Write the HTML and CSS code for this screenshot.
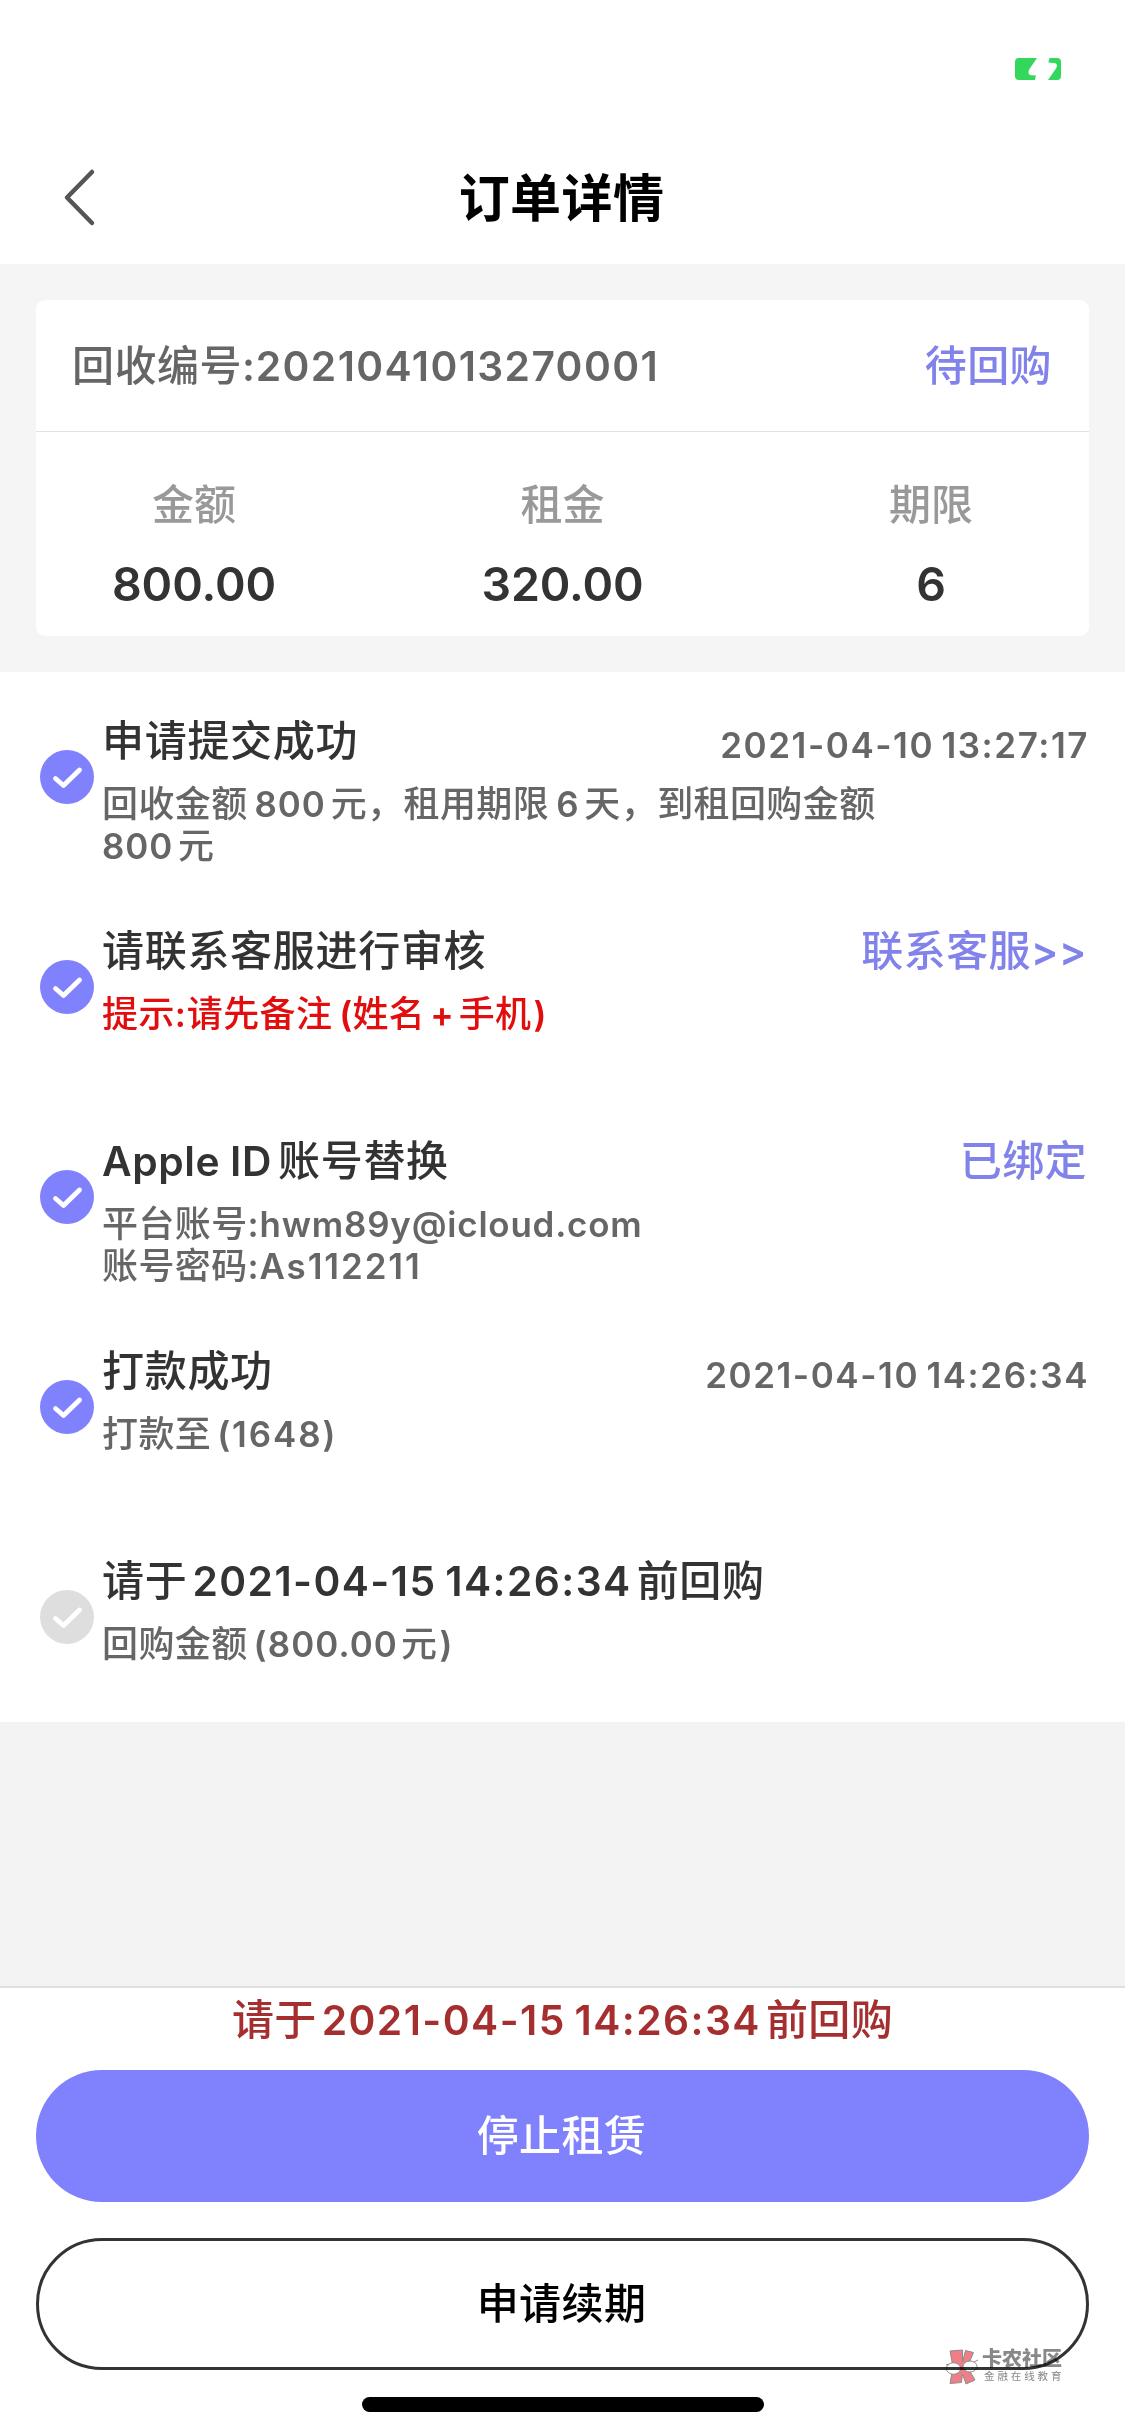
FILE: index.html
```
<!DOCTYPE html>
<html lang="zh-CN">
<head>
<meta charset="utf-8">
<title>订单详情</title>
<link rel="stylesheet" href="styles.css">
</head>
<body>
<svg class="sprite" aria-hidden="true">
  <symbol id="check" viewBox="0 0 54 54">
    <circle cx="27" cy="27" r="27"/>
    <path d="M15.500 28.500L23.500 35.500L39.500 20" fill="none" stroke="#fff" stroke-width="4.800" stroke-linecap="round" stroke-linejoin="round"/>
  </symbol>
</svg>
<div class="screen">
  <div class="statusbar">
    <svg class="battery" width="48" height="24" viewBox="0 0 48 24">
      <path d="M5 1H23L15.200 12.500Q13 17.800 17.500 18.200L22 18.400L20.800 23H5Q1 23 1 19V5Q1 1 5 1Z"/>
      <path d="M35.500 1H43Q47 1 47 5V19Q47 23 43 23H34L42.300 11Q44.500 6.200 40 5.900L34.300 5.600Z"/>
    </svg>
  </div>
  <header class="navbar">
    <svg class="back" width="36" height="60" viewBox="0 0 36 60"><path d="M31 4L6 29.500L31 55"/></svg>
    <h1 class="navtitle">订单详情</h1>
  </header>

  <section class="summary">
    <div class="card">
      <div class="card-head">
        <span>回收编号<span class="num colon">:</span><span class="num order">2021041013270001</span></span>
        <span class="link">待回购</span>
      </div>
      <div class="stats">
        <div class="stat"><span class="label">金额</span><span class="value">800.00</span></div>
        <div class="stat"><span class="label">租金</span><span class="value">320.00</span></div>
        <div class="stat"><span class="label">期限</span><span class="value">6</span></div>
      </div>
    </div>
  </section>

  <ol class="steps">
    <li class="step">
      <svg class="mark"><use href="#check"/></svg>
      <div class="content">
        <div class="line"><span class="title">申请提交成功</span><time class="time num">2021-04-10 13:27:17</time></div>
        <p class="desc">回收金额<span class="num gap">800</span>元，租用期限<span class="num gap">6</span>天，到租回购金额<br><span class="num lead">800</span>元</p>
      </div>
    </li>
    <li class="step">
      <svg class="mark"><use href="#check"/></svg>
      <div class="content">
        <div class="line"><span class="title">请联系客服进行审核</span><a class="link">联系客服<span class="num arrows">&gt;&gt;</span></a></div>
        <p class="desc tip">提示<span class="num colon">:</span>请先备注<span class="num open">(</span>姓名<span class="num plus">+</span>手机<span class="num close">)</span></p>
      </div>
    </li>
    <li class="step">
      <svg class="mark"><use href="#check"/></svg>
      <div class="content">
        <div class="line"><span class="title"><span class="num apple">Apple ID</span>账号替换</span><span class="link">已绑定</span></div>
        <p class="desc">平台账号<span class="num colon">:</span><span class="num mail">hwm89y@icloud.com</span><br>账号密码<span class="num colon">:</span><span class="num">As112211</span></p>
      </div>
    </li>
    <li class="step">
      <svg class="mark"><use href="#check"/></svg>
      <div class="content">
        <div class="line"><span class="title">打款成功</span><time class="time num">2021-04-10 14:26:34</time></div>
        <p class="desc">打款至<span class="num card-no">(1648)</span></p>
      </div>
    </li>
    <li class="step pending">
      <svg class="mark"><use href="#check"/></svg>
      <div class="content">
        <div class="line"><span class="title">请于<span class="num date">2021-04-15 14:26:34</span>前回购</span></div>
        <p class="desc">回购金额<span class="num amount">(800.00</span>元<span class="num close">)</span></p>
      </div>
    </li>
  </ol>

  <footer class="footer">
    <p class="notice">请于<span class="num date">2021-04-15 14:26:34</span>前回购</p>
    <button class="btn primary">停止租赁</button>
    <button class="btn outline">申请续期</button>
    <div class="home"></div>
  </footer>

  <div class="watermark">
    <svg width="34" height="36" viewBox="0 0 34 36">
      <g fill="#ef7f86" stroke="#8c8c8c" stroke-width="1">
        <path d="M5 2L17.500 1L17.500 13L20.500 1.500L28.500 3.500L22.500 18L30 31L21 35L17.500 25L16.500 33.500L5 34.500L8 18Z"/>
      </g>
      <g fill="#fff" stroke="#8c8c8c" stroke-width="1">
        <ellipse cx="8.500" cy="19.500" rx="7" ry="5.800"/>
        <ellipse cx="25" cy="17.500" rx="7" ry="5.500"/>
        <path d="M1 16L4 15M29 13L33 11" fill="none"/>
      </g>
    </svg>
    <div class="wm-text"><span class="wm-name">卡农社区</span><span class="wm-sub">金融在线教育</span></div>
  </div>
</div>
</body>
</html>
```
FILE: styles.css
```
* { box-sizing: border-box; }
body, h1, p, ol { margin: 0; padding: 0; }
body {
  font-family: Inter, "Noto Sans CJK SC", sans-serif;
  font-weight: 500;
  font-size: 42px;
  line-height: 42px;
  color: #333;
  background: #f3f3f3;
}
.sprite { position: absolute; width: 0; height: 0; }
.screen {
  position: relative;
  width: 1125px;
  height: 2436px;
  display: flex;
  flex-direction: column;
  overflow: hidden;
}

/* Latin runs sit slightly smaller and looser than the Chinese text */
.num { font-size: .97em; line-height: 0; letter-spacing: 1.9px; font-weight: 560; }

.statusbar {
  height: 132px;
  padding: 57px 63px 0 0;
  background: #fff;
  display: flex;
  justify-content: flex-end;
}
.battery { fill: #32d75b; }
.navbar {
  height: 132px;
  padding: 0 63px 0 61px;
  background: #fff;
  display: grid;
  grid-template-columns: 36px 1fr 36px;
  align-items: center;
}
.back { fill: none; stroke: #555; stroke-width: 4.5; stroke-linecap: round; stroke-linejoin: round; }
.navtitle { text-align: center; font-size: 51px; line-height: 60px; padding-top: 2px; letter-spacing: .4px; font-weight: 600; color: #000; }

.summary { padding: 36px; background: #f5f5f5; }
.card { height: 336px; background: #fff; border-radius: 9px; }
.card-head {
  height: 132px;
  padding: 0 37px 0 36px;
  border-bottom: 1px solid #e2e2e2;
  display: flex;
  justify-content: space-between;
  align-items: center;
  letter-spacing: .5px;
  color: #666;
}
.order { letter-spacing: 1.4px; }
.link { color: #8283ea; letter-spacing: .4px; }
.stats { display: grid; grid-template-columns: 316px 421px 316px; padding-top: 52px; }
.stat { display: flex; flex-direction: column; align-items: center; gap: 37px; }
.label { color: #999; }
.value { font-size: 46.5px; letter-spacing: -.1px; font-weight: 600; }

.steps { list-style: none; background: #fff; }
.step { height: 210px; padding: 0 38px 0 40px; display: flex; }
.mark { width: 54px; height: 54px; margin-top: 78px; margin-right: 8px; flex: none; fill: #8081fd; }
.pending .mark { fill: #dedede; }
.content { flex: 1; padding-top: 48px; display: flex; flex-direction: column; gap: 21px; }
.line { height: 42px; display: flex; justify-content: space-between; }
.title { letter-spacing: .7px; }
.time { font-size: 35px; line-height: 42px; margin-top: 4px; margin-right: -2px; letter-spacing: 1.55px; word-spacing: -3px; color: #666; }
.desc { font-size: 36px; line-height: 42px; letter-spacing: .4px; color: #666; white-space: nowrap; }
.tip { color: #e20d0d; }
.tip .num { font-weight: 600; }
.gap { margin: 0 5px 0 7px; letter-spacing: .9px; }
.plus { margin: 0 5px; letter-spacing: 0; }
.lead { margin-right: 5px; letter-spacing: .9px; }
.colon { letter-spacing: .8px; }
.open { margin-left: 7px; letter-spacing: 0; }
.close { margin-left: 2px; letter-spacing: 0; }
.arrows { letter-spacing: .6px; }
.apple { margin-right: 6px; letter-spacing: .6px; word-spacing: -1px; }
.mail { letter-spacing: .8px; }
.card-no { margin-left: 6px; letter-spacing: 1.9px; }
.amount { margin-left: 6px; margin-right: 3px; letter-spacing: 1.1px; }
.date { margin: 0 5px; letter-spacing: 1.45px; word-spacing: -3px; }

.footer {
  margin-top: auto;
  height: 450px;
  border-top: 2px solid #e0e0e0;
  background: #fff;
  padding: 0 36px;
  display: flex;
  flex-direction: column;
  align-items: center;
}
.notice { line-height: 64px; margin-bottom: 18px; letter-spacing: .4px; color: #a52f2f; }
.btn {
  width: 100%;
  height: 132px;
  flex: none;
  padding: 0 2px 0 0;
  border: 0;
  border-radius: 66px;
  font: inherit;
  letter-spacing: .4px;
}
.primary { background: #8081fd; color: #fff; margin-bottom: 36px; }
.outline { background: #fff; color: #000; border: 3px solid #333; }
.home { width: 402px; height: 15px; border-radius: 8px; background: #000; margin-top: 27px; }

.watermark {
  position: absolute;
  left: 945px;
  top: 2349px;
  display: flex;
  gap: 3px;
  mix-blend-mode: multiply;
  color: #888;
}
.wm-text { display: flex; flex-direction: column; white-space: nowrap; }
.wm-name { font-size: 20px; line-height: 21px; font-weight: 900; }
.wm-sub { font-size: 10.5px; line-height: 14px; letter-spacing: 2.9px; padding-left: 2px; font-weight: 400; }
```
